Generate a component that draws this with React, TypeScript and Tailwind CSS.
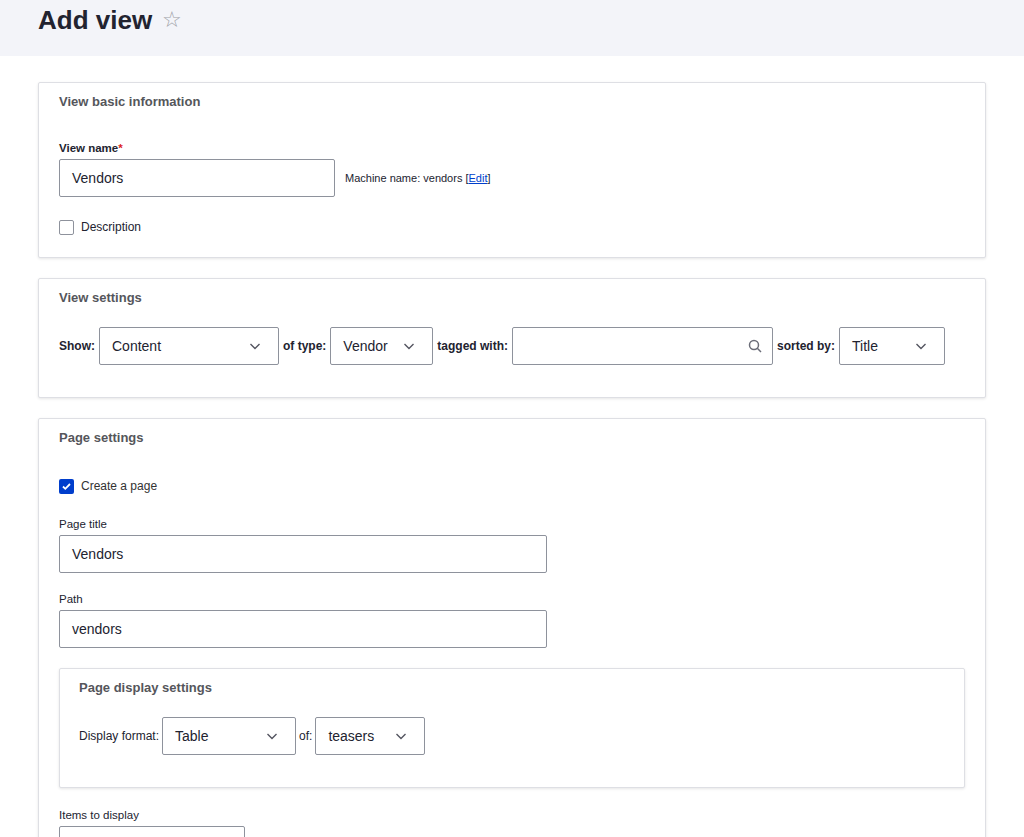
import React from "react";

const Chevron = () => (
  <svg width="14" height="14" viewBox="0 0 14 14" fill="none" stroke="#545560" strokeWidth="1.4"><path d="M2.5 5l4.5 4.5L11.5 5" /></svg>
);

const Select = ({ w, v }: { w: string; v: string }) => (
  <div className={`${w} h-[38px] border border-[#8e929c] rounded-[2px] flex items-center justify-between pl-[12px] pr-[16px] text-[14px] font-normal text-[#222330] bg-white`}>
    <span>{v}</span>
    <Chevron />
  </div>
);

const Input = ({ w, v }: { w: string; v?: string }) => (
  <div className={`${w} h-[38px] border border-[#8e929c] rounded-[2px] flex items-center px-[12px] text-[14px] text-[#222330] bg-white`}>{v}</div>
);

const Card = ({ children, className = "" }: { children: React.ReactNode; className?: string }) => (
  <div className={`border border-[#dedfe4] rounded-[2px] bg-white shadow-[0_1px_3px_rgba(0,0,0,0.1)] ${className}`}>{children}</div>
);

const H = ({ t }: { t: string }) => (
  <div className="text-[13px] font-bold text-[#55565b] leading-[18px]">{t}</div>
);

export default function App() {
  return (
    <div className="min-h-[837px] bg-white text-[#222330] overflow-hidden" style={{ fontFamily: "'Liberation Sans', Arial, sans-serif" }}>
      <div className="h-[56px] bg-[#f3f4f9] px-[38px] flex items-start">
        <h1 className="text-[26px] font-bold leading-[40px] flex items-center gap-[10px]">
          Add view <span className="text-[#a0a2a8] font-normal text-[22px]">☆</span>
        </h1>
      </div>
      <div className="px-[38px] pt-[26px] flex flex-col gap-[20px]">
        <Card className="h-[176px] px-[20px] pt-[10px]">
          <H t="View basic information" />
          <div className="mt-[30px] text-[11.5px] font-bold leading-[14px]">View name<span className="text-[#dc2323]">*</span></div>
          <div className="mt-[4px] flex items-center gap-[10px]">
            <Input w="w-[276px]" v="Vendors" />
            <span className="text-[11px] text-[#222330]">Machine name: vendors [<span className="text-[#003ecc] underline">Edit</span>]</span>
          </div>
          <div className="mt-[21px] flex items-center gap-[7px] text-[12px]">
            <div className="w-[15px] h-[15px] border border-[#8e929c] rounded-[2px]" /> Description
          </div>
        </Card>
        <Card className="h-[120px] px-[20px] pt-[10px]">
          <H t="View settings" />
          <div className="mt-[20px] flex items-center gap-[4px] text-[12px] font-bold">
            <span>Show:</span>
            <Select w="w-[180px]" v="Content" />
            <span>of type:</span>
            <Select w="w-[103px]" v="Vendor" />
            <span>tagged with:</span>
            <div className="w-[261px] h-[38px] border border-[#8e929c] rounded-[2px] flex items-center justify-end pr-[10px]">
              <svg width="14" height="14" viewBox="0 0 14 14" fill="none" stroke="#6b6d78" strokeWidth="1.5"><circle cx="6" cy="6" r="4.5" /><path d="M9.3 9.3L13 13" /></svg>
            </div>
            <span>sorted by:</span>
            <Select w="w-[106px]" v="Title" />
          </div>
        </Card>
        <Card className="h-[460px] px-[20px] pt-[10px]">
          <H t="Page settings" />
          <div className="mt-[30px] flex items-center gap-[7px] text-[12px] text-[#333]">
            <div className="w-[15px] h-[15px] bg-[#003ecc] rounded-[2px] flex items-center justify-center">
              <svg width="11" height="11" viewBox="0 0 11 11" fill="none" stroke="white" strokeWidth="1.8"><path d="M2 5.5l2.3 2.3L9 3" /></svg>
            </div>
            Create a page
          </div>
          <div className="mt-[22px] text-[11.5px] leading-[14px]">Page title</div>
          <div className="mt-[4px]"><Input w="w-[488px]" v="Vendors" /></div>
          <div className="mt-[19px] text-[11.5px] leading-[14px]">Path</div>
          <div className="mt-[4px]"><Input w="w-[488px]" v="vendors" /></div>
          <Card className="mt-[20px] h-[120px] px-[19px] pt-[10px]">
            <H t="Page display settings" />
            <div className="mt-[20px] flex items-center gap-[3px] text-[12px]">
              <span>Display format:</span>
              <Select w="w-[134px]" v="Table" />
              <span>of:</span>
              <Select w="w-[110px]" v="teasers" />
            </div>
          </Card>
          <div className="mt-[20px] text-[11.5px] leading-[14px]">Items to display</div>
          <div className="mt-[4px]"><Input w="w-[186px]" v="10" /></div>
        </Card>
      </div>
    </div>
  );
}
